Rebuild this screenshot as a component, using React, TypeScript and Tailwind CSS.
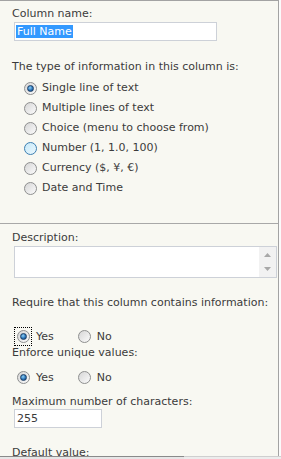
import React from 'react';

type RadioProps = { checked?: boolean; hover?: boolean };

const Radio: React.FC<RadioProps> = ({ checked, hover }) => (
  <span
    className={`flex h-[13px] w-[13px] shrink-0 items-center justify-center rounded-full border ${
      hover
        ? 'border-[#3c7fb1] bg-[linear-gradient(135deg,#c6e9f9,#eaf7fd)]'
        : 'border-[#8e8f8f] bg-[linear-gradient(135deg,#d6d6d6,#fbfbfb)]'
    }`}
  >
    {checked && (
      <span className="h-[7px] w-[7px] rounded-full border border-[#1c3f66] bg-[radial-gradient(circle_at_40%_35%,#8fd0f5,#2a74b8_55%,#0f3f70)]" />
    )}
  </span>
);

const types = [
  { label: 'Single line of text', checked: true },
  { label: 'Multiple lines of text' },
  { label: 'Choice (menu to choose from)' },
  { label: 'Number (1, 1.0, 100)', hover: true },
  { label: 'Currency ($, ¥, €)' },
  { label: 'Date and Time' },
];

const YesNo: React.FC<{ focused?: boolean }> = ({ focused }) => (
  <div className="flex h-[19px] items-center">
    <span
      className={`ml-[2px] flex h-[19px] w-[18px] items-center justify-center ${
        focused ? 'border border-dotted border-black' : 'border border-transparent'
      }`}
    >
      <Radio checked />
    </span>
    <span className="ml-[4px]">Yes</span>
    <span className="ml-[24px]">
      <Radio />
    </span>
    <span className="ml-[6px]">No</span>
  </div>
);

export default function App() {
  return (
    <div
      className="h-[459px] w-[281px] overflow-hidden bg-[#fbfbfb] text-[11px] leading-[14px] text-[#3b3b3b]"
      style={{ fontFamily: '"DejaVu Sans", Verdana, sans-serif' }}
    >
      <div className="h-[456px] w-[279px] overflow-hidden border-t border-r border-[#a3a3a3] bg-[#f8f8f2]">
        <div className="border-b border-[#a8a8a8] pb-[25px] pl-[12px] pt-[6px]">
          <div>Column name:</div>
          <div className="ml-[2px] mt-[1px] flex h-[19px] w-[203px] items-center border border-[#cdd1d8] bg-white pl-[1px]">
            <span className="bg-[#3399ff] px-[1px] leading-[13px] text-white">Full Name</span>
          </div>
          <div className="mt-[19px]">The type of information in this column is:</div>
          <div className="mt-[4px]">
            {types.map((t) => (
              <div key={t.label} className="flex h-[20px] items-center pl-[12px]">
                <Radio checked={t.checked} hover={t.hover} />
                <span className="ml-[5px]">{t.label}</span>
              </div>
            ))}
          </div>
        </div>

        <div className="pl-[12px]">
          <div className="mt-[7px]">Description:</div>
          <div className="ml-[2px] mt-[1px] flex h-[32px] w-[263px] border border-[#cdd1d8] bg-white">
            <div className="flex-1" />
            <div className="flex w-[17px] flex-col items-center justify-between bg-[#f2f2f2] py-[6px]">
              <svg width="7" height="4" viewBox="0 0 7 4">
                <path d="M0 4 L3.5 0 L7 4 Z" fill="#a8a8a8" />
              </svg>
              <svg width="7" height="4" viewBox="0 0 7 4">
                <path d="M0 0 L7 0 L3.5 4 Z" fill="#a8a8a8" />
              </svg>
            </div>
          </div>
          <div className="mt-[18px]">Require that this column contains information:</div>
          <div className="mt-[17px]">
            <YesNo focused />
          </div>
          <div>Enforce unique values:</div>
          <div className="mt-[8px]">
            <YesNo />
          </div>
          <div className="mt-[8px]">Maximum number of characters:</div>
          <div className="ml-[2px] flex h-[19px] w-[88px] items-center border border-[#cdd1d8] bg-white pl-[2px]">
            255
          </div>
          <div className="mt-[18px]">Default value:</div>
        </div>
      </div>
      <div className="flex h-[3px]">
        <div className="w-[184px] border-t border-[#8a8a8a] bg-[#e6e6e6]" />
        <div className="flex-1 border-t border-[#cfcfcf] bg-[#ececec]" />
      </div>
    </div>
  );
}
